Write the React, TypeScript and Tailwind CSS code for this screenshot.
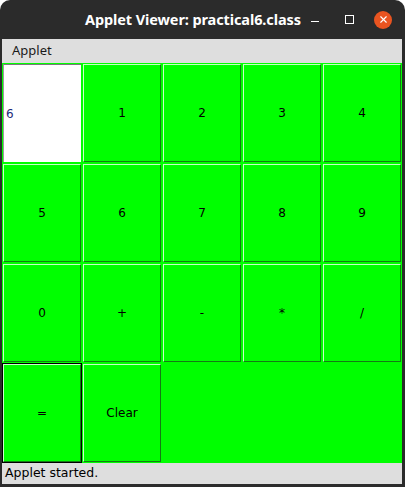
import { X } from "lucide-react";

const keys = ["1", "2", "3", "4", "5", "6", "7", "8", "9", "0", "+", "-", "*", "/", "=", "Clear"];

function Key({ label, focused }: { label: string; focused?: boolean }) {
  return (
    <div className="p-px">
      <div className={`h-full w-full ${focused ? "outline outline-1 outline-black" : ""}`}>
        <button className="flex h-full w-full items-center justify-center border-t border-l border-r border-b border-t-[#c8ffc8] border-l-[#c8ffc8] border-r-[#157a15] border-b-[#157a15] bg-[#00ff00] text-[12px] text-black font-['DejaVu_Sans',sans-serif]">
          {label}
        </button>
      </div>
    </div>
  );
}

export default function App() {
  return (
    <div className="h-[487px] w-[405px] bg-white">
      <div className="flex h-full w-full flex-col rounded-t-[10px] bg-[#2b2b2b] pl-[2px] pr-[3px] pb-[3px]">
        {/* title bar */}
        <div className="flex h-[39px] shrink-0 items-center text-white">
          <span className="ml-[83px] text-[14.5px] font-bold font-['Noto_Sans',sans-serif] tracking-[-0.1px]">
            Applet Viewer: practical6.class
          </span>
          <div className="ml-auto mr-[10px] flex items-center">
            <div className="mt-[3px] h-px w-[8px] bg-white" />
            <div className="ml-[26px] h-[9px] w-[9px] border border-white" />
            <div className="ml-[20px] flex h-[18px] w-[18px] items-center justify-center rounded-full bg-[#e95420]">
              <X className="h-[11px] w-[11px] text-white" strokeWidth={2.5} />
            </div>
          </div>
        </div>

        {/* menu bar */}
        <div className="flex h-[24px] shrink-0 items-center bg-[#dedede] pl-[10px] text-[13px] text-[#1a1a1a] font-['Noto_Sans',sans-serif]">
          Applet
        </div>

        {/* applet */}
        <div className="grid h-[400px] shrink-0 grid-cols-5 grid-rows-4 bg-[#00ff00]">
          <div className="p-px">
            <div className="flex h-full w-full items-center border-t border-l border-t-[#7a7a7a] border-l-[#9a9a9a] bg-white pl-[2px] text-[12px] text-[#1e2a78] font-['DejaVu_Sans',sans-serif]">
              6
            </div>
          </div>
          {keys.map((k) => (
            <Key key={k} label={k} focused={k === "="} />
          ))}
        </div>

        {/* status */}
        <div className="flex h-[21px] shrink-0 items-center bg-[#dedede] pl-[3px] text-[12.5px] text-black font-['DejaVu_Sans',sans-serif]">
          Applet started.
        </div>
      </div>
    </div>
  );
}
